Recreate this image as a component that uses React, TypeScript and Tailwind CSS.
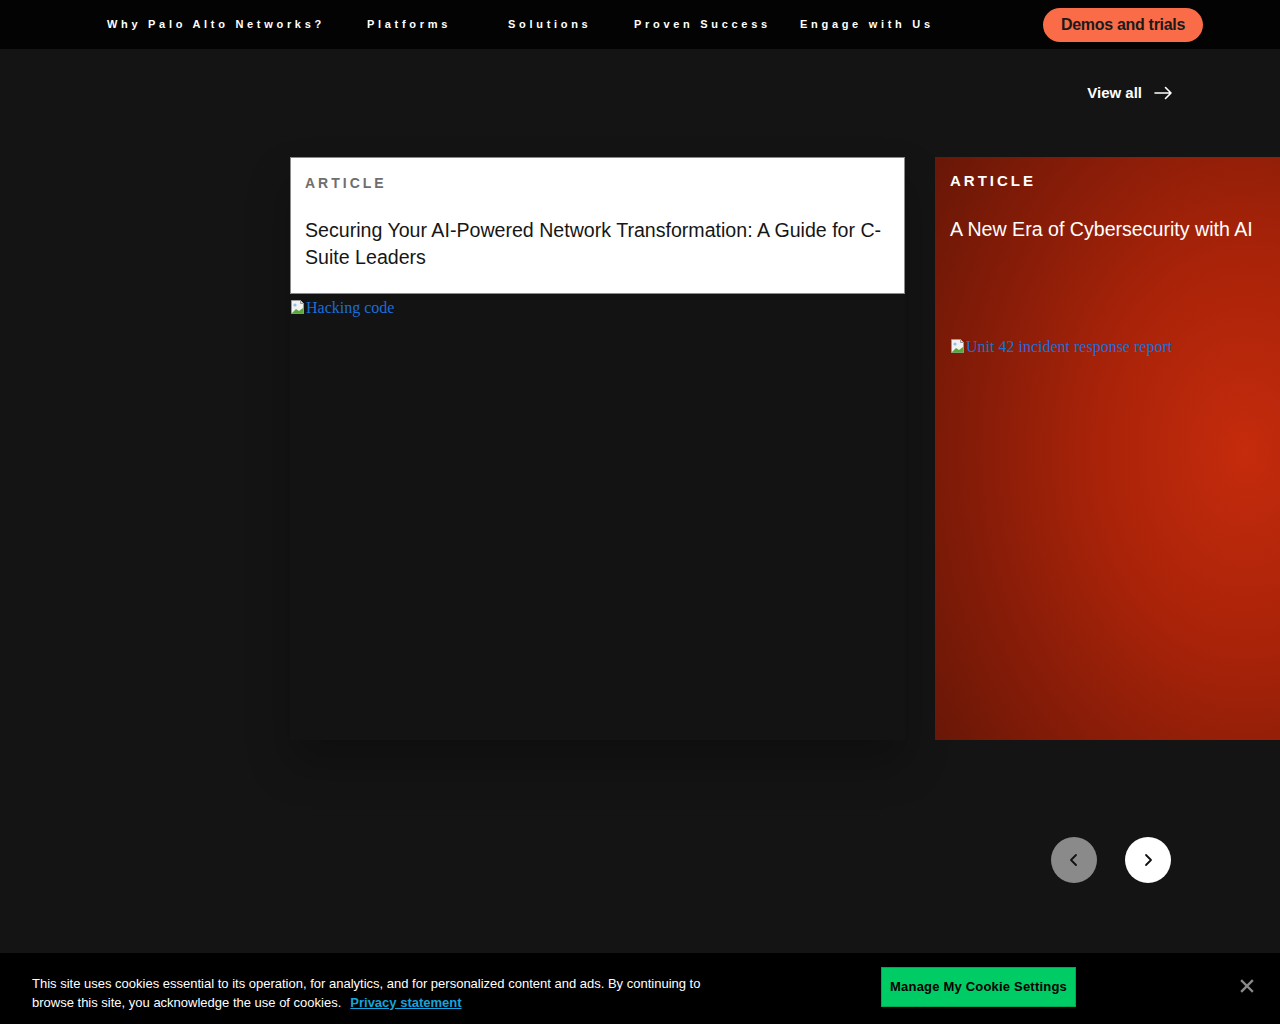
import React from "react";

const BrokenImg = () => (
  <svg width="16" height="16" viewBox="0 0 16 16" className="inline-block align-[-2px]">
    <path d="M1.5 1.5h9l3 3v10h-12z" fill="#f2f2f2" stroke="#9a9a9a" />
    <path d="M10.5 1.5v3h3" fill="#dcdcdc" stroke="#9a9a9a" />
    <circle cx="5" cy="6" r="1.6" fill="#8fbfe8" />
    <path d="M2 14l4-4 3 2 4-3v5.5H2z" fill="#5aa83c" />
  </svg>
);

function Chevron({ dir }: { dir: "l" | "r" }) {
  return (
    <svg width="14" height="14" viewBox="0 0 14 14" fill="none" stroke="#111" strokeWidth="1.8" strokeLinecap="round" strokeLinejoin="round">
      {dir === "l" ? <path d="M9 2L4 7l5 5" /> : <path d="M5 2l5 5-5 5" />}
    </svg>
  );
}

export default function App() {
  const sans = { fontFamily: '"Liberation Sans", Arial, sans-serif' };
  const serif = { fontFamily: '"Liberation Serif", "Times New Roman", serif' };
  return (
    <div className="w-[1280px] h-[1024px] bg-[#141414] overflow-hidden relative" style={sans}>
      {/* Nav */}
      <nav className="h-[49px] bg-[#030303] flex items-center pl-[107px] pr-[77px]">
        <div className="flex items-center text-white font-bold text-[11px] tracking-[3.7px]">
          <span className="w-[260px]">Why Palo Alto Networks?</span>
          <span className="w-[141px]">Platforms</span>
          <span className="w-[126px]">Solutions</span>
          <span className="w-[166px]">Proven Success</span>
          <span>Engage with Us</span>
        </div>
        <button className="ml-auto mt-[1px] h-[34px] w-[160px] rounded-full bg-[#fa6b47] text-[#1a1a1a] font-bold text-[16px] leading-[34px] tracking-[-0.3px]">
          Demos and trials
        </button>
      </nav>

      {/* View all */}
      <div className="flex justify-end pr-[107px] pt-[34px] h-[108px]">
        <div className="flex items-center gap-[12px] text-white font-bold text-[15px] h-[20px]">
          <span>View all</span>
          <svg width="19" height="14" viewBox="0 0 19 14" fill="none" stroke="#fff" strokeWidth="1.6" strokeLinecap="round" strokeLinejoin="round">
            <path d="M1 7h16M11.5 1.5L17 7l-5.5 5.5" />
          </svg>
        </div>
      </div>

      {/* Cards */}
      <div className="flex gap-[30px] pl-[290px]">
        <div className="w-[615px] h-[583px] shrink-0 flex flex-col bg-[#131313] shadow-[0_24px_40px_rgba(0,0,0,0.25)]">
          <div className="bg-white border border-[#8a8a8a] px-[14px] pt-[15px] pb-[22px]">
            <div className="text-[14px] leading-[20px] font-bold tracking-[3px] text-[#6e6e6e]">ARTICLE</div>
            <div className="mt-[24px] text-[19.6px] leading-[27px] text-[#161616]">
              Securing Your AI-Powered Network Transformation: A Guide for C-Suite Leaders
            </div>
          </div>
          <div className="flex-1 pt-[2px]">
            <span className="text-[16px] text-[#1a6ed8]" style={serif}>
              <BrokenImg />Hacking code
            </span>
          </div>
        </div>

        <div
          className="w-[615px] h-[583px] shrink-0 px-[15px] pt-[14px]"
          style={{
            background:
              "radial-gradient(ellipse 420px 560px at 310px 295px, #c52b0c 0%, #a92309 35%, #851c08 65%, #5e1507 100%)",
          }}
        >
          <div className="text-[15px] leading-[20px] font-bold tracking-[3px] text-white">ARTICLE</div>
          <div className="mt-[25px] text-[19.6px] leading-[27px] text-white">A New Era of Cybersecurity with AI</div>
          <div className="mt-[92px]">
            <span className="text-[16px] text-[#1a6ed8]" style={serif}>
              <BrokenImg />Unit 42 incident response report
            </span>
          </div>
        </div>
      </div>

      {/* Arrows */}
      <div className="flex justify-end gap-[28px] pr-[109px] mt-[97px]">
        <button className="w-[46px] h-[46px] rounded-full bg-[#8a8a8a] flex items-center justify-center">
          <Chevron dir="l" />
        </button>
        <button className="w-[46px] h-[46px] rounded-full bg-white flex items-center justify-center">
          <Chevron dir="r" />
        </button>
      </div>

      {/* Cookie banner */}
      <div className="absolute left-0 right-0 bottom-0 h-[71px] bg-black flex items-start pl-[32px]">
        <p className="mt-[21px] w-[690px] text-white text-[13px] leading-[19px]">
          This site uses cookies essential to its operation, for analytics, and for personalized content and ads. By continuing to
          browse this site, you acknowledge the use of cookies.
          <a className="ml-[9px] font-bold text-[#16a4dc] underline">Privacy statement</a>
        </p>
        <button className="mt-[14px] ml-[159px] w-[195px] h-[40px] bg-[#00cc66] border border-[#00a855] text-black font-bold text-[13px] tracking-[0.2px]">
          Manage My Cookie Settings
        </button>
        <svg className="mt-[26px] ml-auto mr-[26px]" width="14" height="14" viewBox="0 0 14 14" stroke="#8a8a8a" strokeWidth="2.4" strokeLinecap="square">
          <path d="M2 2l10 10M12 2L2 12" />
        </svg>
      </div>
    </div>
  );
}
